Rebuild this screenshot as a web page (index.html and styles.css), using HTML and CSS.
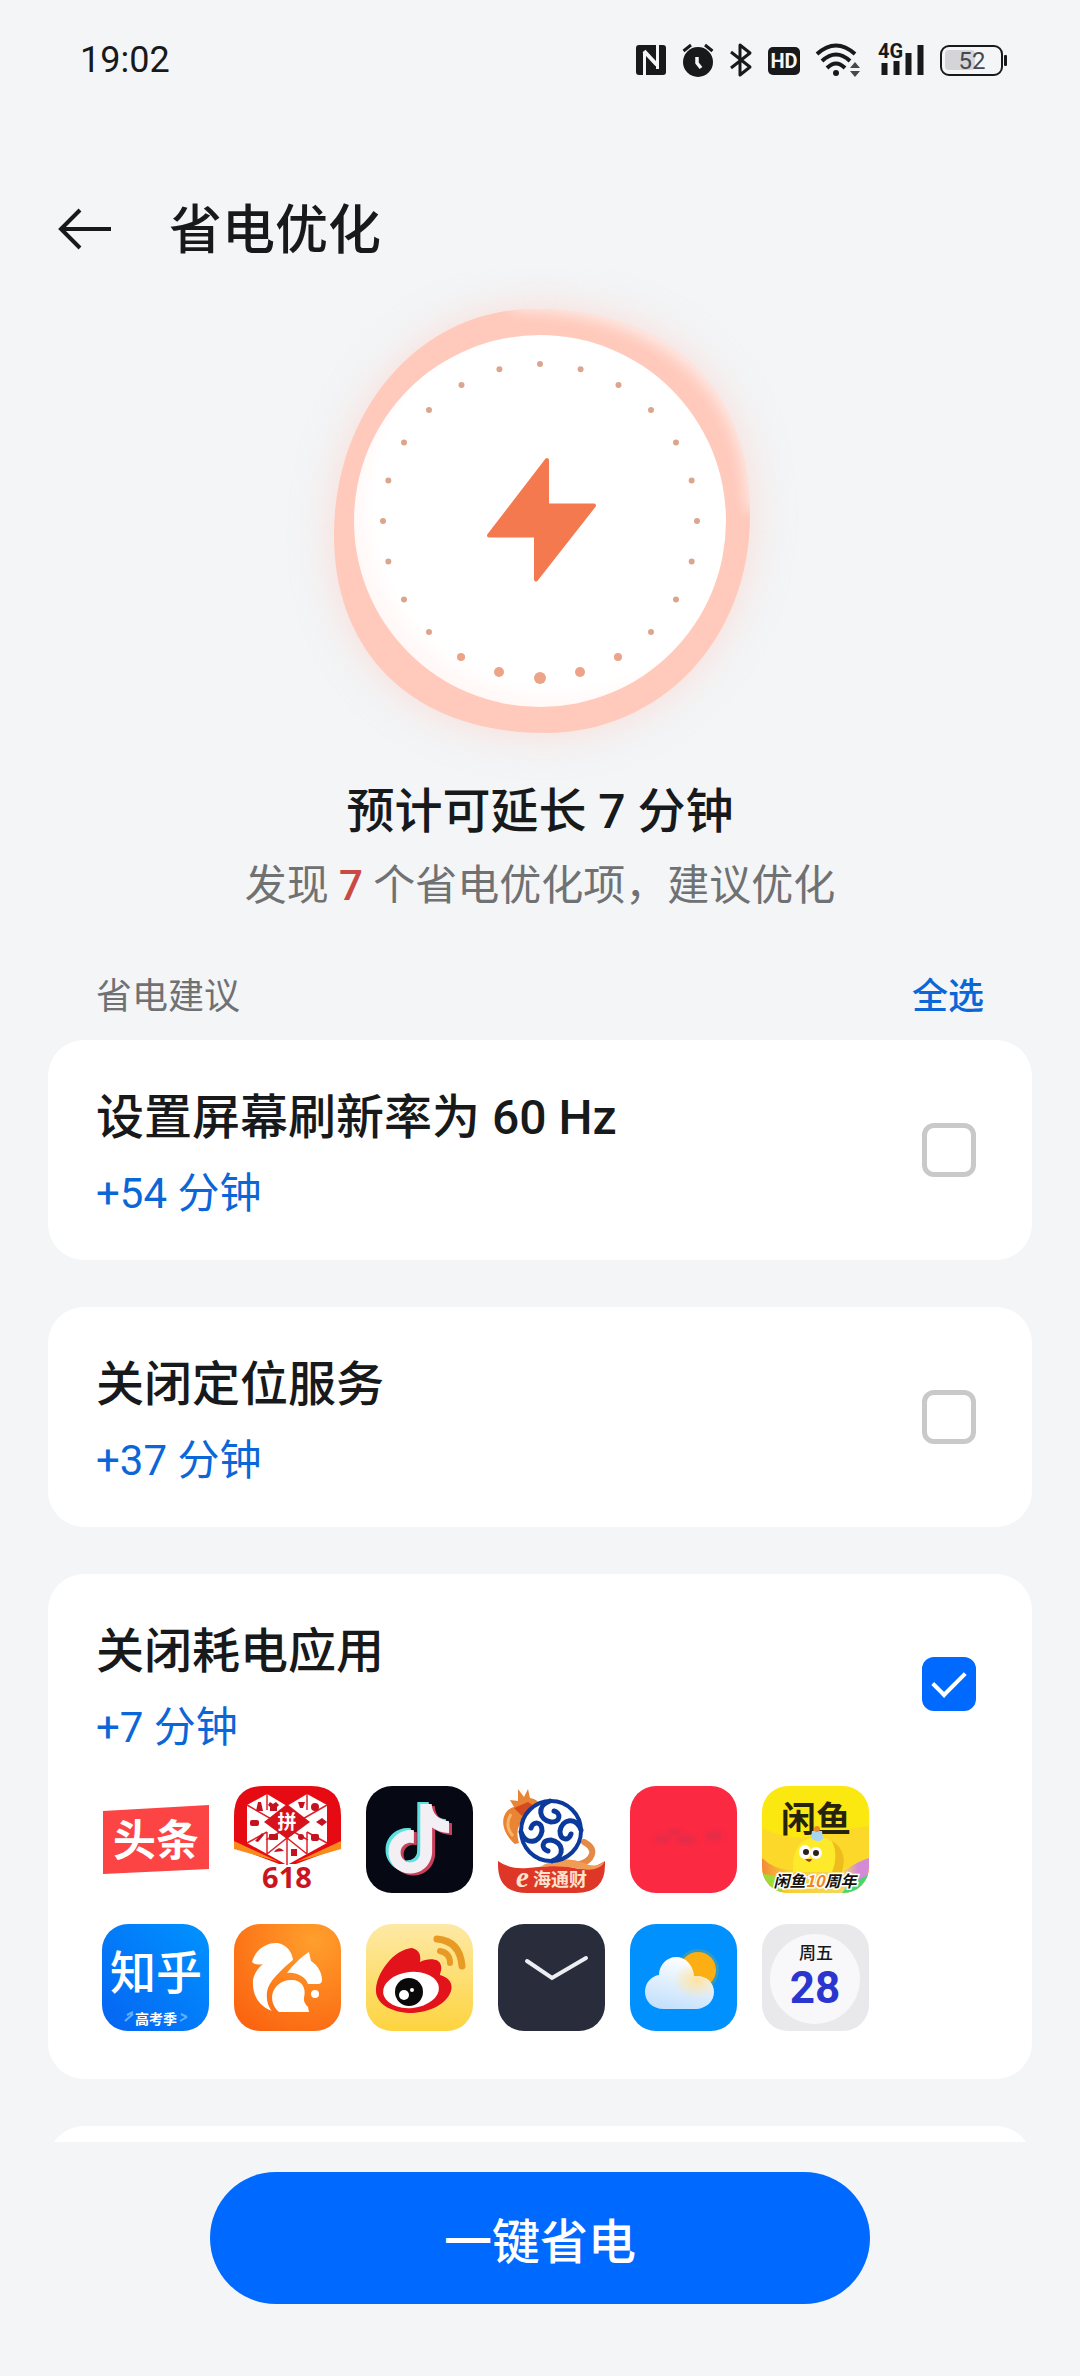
FILE: index.html
```html
<!DOCTYPE html>
<html lang="zh-CN">
<head>
  <meta charset="utf-8">
  <meta name="viewport" content="width=device-width, initial-scale=1">
  <title>省电优化</title>
  <link rel="stylesheet" href="styles.css">
</head>
<body>
  <div class="status-bar">
    <span class="time">19:02</span>
    <div class="status-icons">
      <!-- NFC -->
      <svg width="30" height="34" viewBox="0 0 30 34">
        <rect y="2" width="30" height="30" rx="3" fill="#17191b"/>
        <path d="M8.500 32V9M21.500 26V2" fill="none" stroke="#f3f5f7" stroke-width="3"/>
        <path d="M8 8l13 14" stroke="#f3f5f7" stroke-width="4"/>
      </svg>
      <!-- alarm -->
      <svg width="32" height="34" viewBox="0 0 32 34">
        <circle cx="16" cy="19" r="15" fill="#17191b"/>
        <path d="M1.500 8L9 2M30.500 8L23 2" stroke="#17191b" stroke-width="3"/>
        <path d="M15 14v6l4 5" fill="none" stroke="#f3f5f7" stroke-width="3.500"/>
      </svg>
      <!-- bluetooth -->
      <svg width="22" height="34" viewBox="0 0 22 34">
        <path d="M1 9l19 15-10 8V2l10 8L1 25" fill="none" stroke="#17191b" stroke-width="3" stroke-linejoin="round"/>
      </svg>
      <!-- HD -->
      <svg width="32" height="34" viewBox="0 0 32 34">
        <rect y="4" width="32" height="28" rx="5" fill="#17191b"/>
        <text x="16" y="25" text-anchor="middle" class="hd-text">HD</text>
      </svg>
      <!-- wifi -->
      <svg width="46" height="34" viewBox="0 0 46 34">
        <g fill="none" stroke="#17191b" stroke-width="4">
          <path d="M1 11Q20-6 39 11"/>
          <path d="M6 18Q20 5 34 18"/>
          <path d="M11 25Q20 16 29 25"/>
        </g>
        <circle cx="20" cy="30" r="3" fill="#17191b"/>
        <path d="M34 25l5-6 5 6zM34 28h10l-5 6z" fill="#47484b"/>
      </svg>
      <!-- signal -->
      <svg width="46" height="34" viewBox="0 0 46 34">
        <text x="0" y="15" class="net-text">4G</text>
        <path d="M6.500 32V20M18.500 32V18M30.500 32V10M42.500 32V2" stroke="#17191b" stroke-width="6"/>
      </svg>
      <!-- battery -->
      <svg width="68" height="34" viewBox="0 0 68 34">
        <rect x="5" y="7" width="30" height="20" rx="4" fill="#d5d4d8"/>
        <rect x="1" y="3" width="61" height="29" rx="8" fill="none" stroke="#17191b" stroke-width="2"/>
        <rect x="64" y="12" width="3" height="11" rx="1" fill="#17191b"/>
        <text x="32" y="26" text-anchor="middle" class="battery-text">52</text>
      </svg>
    </div>
  </div>

  <header class="header">
    <button class="back" aria-label="返回">
      <svg width="54" height="44" viewBox="0 0 54 44">
        <path d="M23 3L4 22l19 19M4 22h50" fill="none" stroke="#17191b" stroke-width="4"/>
      </svg>
    </button>
    <h1>省电优化</h1>
  </header>

  <main class="content">
    <section class="hero">
      <svg class="dial" width="520" height="500" viewBox="0 0 520 500">
        <defs>
          <path id="blob" d="M255 39C380 39 470 110 470 245C470 370 380 463 265 463C135 463 54 385 54 265C54 140 140 39 255 39Z"/>
          <clipPath id="blobClip"><use href="#blob"/></clipPath>
          <filter id="glow" x="-30%" y="-30%" width="160%" height="160%"><feGaussianBlur stdDeviation="22"/></filter>
          <filter id="soft" x="-30%" y="-30%" width="160%" height="160%"><feGaussianBlur stdDeviation="8"/></filter>
          <radialGradient id="face" cx="0.55" cy="0.45" r="0.56">
            <stop offset="0.88" stop-color="#fff"/>
            <stop offset="1" stop-color="#fff8f6"/>
          </radialGradient>
        </defs>
        <use href="#blob" fill="#ffc3b4" opacity="0.5" filter="url(#glow)"/>
        <use href="#blob" fill="#ffc9bb"/>
        <g clip-path="url(#blobClip)">
          <path d="M230 30C390 30 478 120 476 240" fill="none" stroke="#fdf0ec" stroke-width="18" filter="url(#soft)"/>
        </g>
        <circle cx="260" cy="251" r="186" fill="url(#face)"/>
        <!-- 24 ticks, the lowest five are bigger -->
        <circle cx="260" cy="251" r="157" fill="none" stroke="#dba58e" stroke-width="6" stroke-linecap="round" pathLength="24" stroke-dasharray="0 1"/>
        <g fill="#eda387">
          <circle cx="181" cy="387" r="4"/>
          <circle cx="219" cy="402" r="5"/>
          <circle cx="260" cy="408" r="6"/>
          <circle cx="300" cy="402" r="5"/>
          <circle cx="338" cy="387" r="4"/>
        </g>
        <path d="M267 190V235.500H314L256 309.500V265.500H209Z" fill="#f4794f" stroke="#f4794f" stroke-width="4" stroke-linejoin="round"/>
      </svg>
      <h2>预计可延长 7 分钟</h2>
      <p class="found">发现 <span class="count">7</span> 个省电优化项，建议优化</p>
    </section>

    <div class="list-head">
      <span>省电建议</span>
      <button class="select-all">全选</button>
    </div>

    <section class="card">
      <div class="row">
        <label for="refresh">
          <span class="name">设置屏幕刷新率为 60 Hz</span>
          <span class="gain">+54 分钟</span>
        </label>
        <input type="checkbox" id="refresh">
      </div>
    </section>

    <section class="card">
      <div class="row">
        <label for="location">
          <span class="name">关闭定位服务</span>
          <span class="gain">+37 分钟</span>
        </label>
        <input type="checkbox" id="location">
      </div>
    </section>

    <section class="card">
      <div class="row">
        <label for="apps">
          <span class="name">关闭耗电应用</span>
          <span class="gain">+7 分钟</span>
        </label>
        <input type="checkbox" id="apps" checked>
      </div>
      <div class="apps">
        <!-- toutiao -->
        <svg class="app" viewBox="0 0 107 107">
          <path d="M1 25L107 19V83L1 88Z" fill="#fb4443"/>
          <text x="54" y="70" class="cjk bold" font-size="43" text-anchor="middle" fill="#fff">头条</text>
        </svg>
        <!-- pinduoduo -->
        <svg class="app" viewBox="0 0 107 107">
          <path d="M0 61V30Q0 0 30 0H77Q107 0 107 30V61L62 78H45Z" fill="#e60a12"/>
          <path d="M0 55L45 76 0 63ZM107 55L62 76 107 63Z" fill="#f98a1c"/>
          <path d="M33 8L53 20 73 8 93 19V57L53 79 13 57V19Z" fill="#fff"/>
          <path d="M13 19L74 54M93 19L32 54M33 8V24M73 8V24M13 57L33 46M93 57L73 46M33 46V68M73 46V68M53 50V79M33 68L53 52 73 68" stroke="#e0202a" stroke-width="1.500" fill="none"/>
          <path d="M53 18L76 36 53 53 30 36Z" fill="#d8121c"/>
          <text x="53" y="43" class="cjk bold" font-size="19" text-anchor="middle" fill="#fff">拼</text>
          <g fill="#c41220">
            <path d="M24 16h3l2 9h-7zM36 16l3 2 3-2 3 3-2 2v4h-7v-4l-2-2z"/>
            <path d="M64 16h7l-2 6h-3z"/>
            <circle cx="81" cy="21" r="4"/>
            <rect x="16" y="34" width="9" height="6" rx="2"/>
            <path d="M82 36l6-4 5 4-5 4z"/>
            <path d="M21 55l7-8 2 2-6 7z"/>
            <rect x="35" y="48" width="9" height="6" rx="1"/>
            <circle cx="67" cy="51" r="3"/>
            <rect x="77" y="48" width="8" height="7" rx="2"/>
            <path d="M40 66q5-7 10-1zM57 63h6v7h-6z"/>
          </g>
          <text x="53" y="102" class="noto bold" font-size="29" text-anchor="middle" fill="#c9151e">618</text>
        </svg>
        <!-- douyin -->
        <svg class="app" viewBox="0 0 107 107">
          <defs>
            <path id="note" d="M12.525.02c1.310-.02 2.610-.01 3.910-.02.080 1.530.630 3.090 1.750 4.170 1.120 1.110 2.700 1.620 4.240 1.790v4.030c-1.440-.05-2.890-.35-4.200-.97-.57-.26-1.100-.59-1.620-.93-.01 2.920.010 5.840-.02 8.750-.08 1.400-.54 2.790-1.350 3.940-1.310 1.920-3.580 3.170-5.910 3.210-1.430.080-2.860-.31-4.080-1.030-2.020-1.190-3.440-3.370-3.650-5.710-.02-.5-.03-1-.01-1.490.180-1.900 1.120-3.720 2.580-4.960 1.660-1.440 3.980-2.130 6.150-1.720.020 1.480-.04 2.960-.04 4.440-.99-.32-2.150-.23-3.020.370-.63.410-1.110 1.040-1.360 1.750-.21.510-.15 1.070-.14 1.610.240 1.640 1.820 3.020 3.500 2.870 1.120-.01 2.190-.66 2.770-1.610.190-.33.400-.67.410-1.060.100-1.790.060-3.570.070-5.360.010-4.030-.01-8.050.020-12.070z"/>
          </defs>
          <rect width="107" height="107" rx="26" fill="#060813"/>
          <use href="#note" transform="translate(15 16) scale(2.900)" fill="#5ce0e0"/>
          <use href="#note" transform="translate(21 20) scale(2.900)" fill="#c9405c"/>
          <use href="#note" transform="translate(18 18) scale(2.900)" fill="#f2f0f4"/>
        </svg>
        <!-- e haitong -->
        <svg class="app" viewBox="0 0 107 107">
          <path d="M17 58C-1 42 4 24 16 21L12 14 20 15 20 3 26 11 30 3 32 12C40 13 45 20 42 27C34 29 28 29 24 35C18 42 19 50 21 57Z" fill="#e88434"/>
          <path d="M16 22L30 16 41 23 31 25 24 30Z" fill="#d64a1f"/>
          <path d="M13 28Q6 40 15 50" fill="none" stroke="#f6b567" stroke-width="3"/>
          <path d="M86 56C101 64 93 75 82 78" fill="none" stroke="#e58a46" stroke-width="6" stroke-linecap="round"/>
          <path d="M0 75Q12 84 30 82T66 79Q88 88 107 75V79Q107 107 78 107H29Q0 107 0 79Z" fill="#df3727"/>
          <path d="M42 81Q64 68 86 77 98 83 107 75 102 86 84 83 62 79 42 81Z" fill="#f29b55"/>
          <circle cx="53" cy="45" r="30" fill="#fff" stroke="#0b3a9c" stroke-width="4"/>
          <g fill="none" stroke="#0b3a9c" stroke-width="5" stroke-linecap="round">
            <path d="M52 15C38 20 41 34 53 36C63 36 63 27 56 25"/>
            <path d="M83 44C78 30 64 33 62 45C62 55 71 55 73 48"/>
            <path d="M54 75C68 70 65 56 53 54C43 54 43 63 50 65"/>
            <path d="M23 46C28 60 42 57 44 45C44 35 35 35 33 42"/>
          </g>
          <text x="18" y="101" class="serif" font-size="29" fill="#fbe3cd">e</text>
          <text x="62" y="100" class="cjk bold" font-size="18" text-anchor="middle" fill="#fbe3cd">海通财</text>
        </svg>
        <!-- app with a worn-off label -->
        <svg class="app" viewBox="0 0 107 107">
          <defs><filter id="smudge"><feGaussianBlur stdDeviation="2"/></filter></defs>
          <rect width="107" height="107" rx="26" fill="#fc2943"/>
          <g fill="#c43350" opacity="0.4" filter="url(#smudge)">
            <ellipse cx="32" cy="53" rx="9" ry="4"/>
            <ellipse cx="56" cy="54" rx="10" ry="5"/>
            <ellipse cx="84" cy="50" rx="9" ry="5"/>
            <ellipse cx="44" cy="46" rx="8" ry="3"/>
          </g>
        </svg>
        <!-- xianyu -->
        <svg class="app" viewBox="0 0 107 107">
          <defs>
            <clipPath id="round"><rect width="107" height="107" rx="26"/></clipPath>
            <linearGradient id="xyFloor" x1="0" x2="1">
              <stop offset="0" stop-color="#f4893a"/>
              <stop offset="0.25" stop-color="#f8cf2f"/>
              <stop offset="0.75" stop-color="#f0d85e"/>
              <stop offset="0.9" stop-color="#d58ad8"/>
            </linearGradient>
          </defs>
          <g clip-path="url(#round)">
            <rect width="107" height="107" fill="#fbe810"/>
            <path d="M0 42Q30 56 53 50T107 40V90H0Z" fill="#fcd82a"/>
            <path d="M0 72Q14 86 36 84L84 84Q94 76 107 72V107H0Z" fill="url(#xyFloor)"/>
            <path d="M0 88L20 90V107H0Z" fill="#9edb35"/>
            <path d="M86 100L107 88V107H80Z" fill="#42d970"/>
            <text x="54" y="46" class="cjk bold" font-size="35" text-anchor="middle" fill="#26220c">闲鱼</text>
            <path d="M31 86C30 66 36 54 52 51C70 50 84 62 81 86Z" fill="#fdea2b"/>
            <path d="M70 55C82 62 84 74 80 86H70Q77 70 70 55Z" fill="#efbc1e"/>
            <path d="M49 52L50 45 60 45 61 53Q55 58 49 52Z" fill="#a8d5ef"/>
            <circle cx="55" cy="43" r="3" fill="#e98931"/>
            <ellipse cx="43" cy="66" rx="6" ry="7" fill="#fff"/>
            <ellipse cx="54" cy="67" rx="6" ry="6" fill="#fff"/>
            <circle cx="44" cy="66" r="3" fill="#2c2218"/>
            <circle cx="54" cy="67" r="3" fill="#2c2218"/>
            <path d="M43 73H50Q48 79 43 73Z" fill="#a33b18"/>
          </g>
          <text x="53" y="101" class="cjk bold slant" font-size="16" text-anchor="middle" fill="#17120d" stroke="#fff" stroke-width="3" paint-order="stroke">闲鱼<tspan fill="#ef8420">10</tspan>周年</text>
        </svg>
        <!-- zhihu -->
        <svg class="app" viewBox="0 0 107 107">
          <defs>
            <linearGradient id="zh" x1="1" y1="0" x2="0" y2="1">
              <stop offset="0" stop-color="#0093ff"/>
              <stop offset="1" stop-color="#0564f2"/>
            </linearGradient>
          </defs>
          <rect width="107" height="107" rx="26" fill="url(#zh)"/>
          <text x="54" y="65" class="cjk medium" font-size="46" text-anchor="middle" fill="#fff">知乎</text>
          <path d="M23 97l8-7M25 91l6-3M79 90l6 3M78 97l7-4" stroke="#5fb0ff" stroke-width="2"/>
          <text x="54" y="100" class="cjk bold" font-size="14" text-anchor="middle" fill="#fff">高考季</text>
        </svg>
        <!-- uc -->
        <svg class="app" viewBox="0 0 107 107">
          <defs>
            <radialGradient id="uc" cx="0.75" cy="0.15" r="1">
              <stop offset="0" stop-color="#ff9f2c"/>
              <stop offset="1" stop-color="#fb6410"/>
            </radialGradient>
          </defs>
          <rect width="107" height="107" rx="26" fill="url(#uc)"/>
          <g fill="#fff">
            <path d="M18 38C22 24 34 18 44 19C53 21 58 28 59 36C47 46 34 58 33 68C32 77 35 84 38 87C24 82 18 70 19 56C20 50 24 44 29 40C25 41 21 41 18 38Z"/>
            <path d="M53 49C59 41 67 33 75 28L77 37C85 42 88 50 88 56Q88 60 84 60H74C71 52 62 48 53 49Z"/>
            <path d="M56 56C66 55 73 62 70 74Q69 78 74 83L75 88H45C38 82 37 74 39 68C42 60 50 56 56 56Z"/>
            <circle cx="81" cy="70" r="4"/>
          </g>
        </svg>
        <!-- weibo -->
        <svg class="app" viewBox="0 0 107 107">
          <defs>
            <linearGradient id="wb" x1="0" y1="0" x2="0" y2="1">
              <stop offset="0" stop-color="#fde9a6"/>
              <stop offset="1" stop-color="#fdd43f"/>
            </linearGradient>
          </defs>
          <rect width="107" height="107" rx="26" fill="url(#wb)"/>
          <path d="M10 68C9 50 28 25 46 24C54 26 55 32 54 38C62 34 74 34 75 42C76 46 74 49 74 51C84 54 87 60 85 67C80 82 60 89 43 89C25 88 11 80 10 68Z" fill="#e3131c"/>
          <ellipse cx="45" cy="66" rx="28" ry="18" transform="rotate(-6 45 66)" fill="#fff"/>
          <circle cx="43" cy="68" r="14" fill="#0a0a0a"/>
          <circle cx="38" cy="71" r="5" fill="#fff"/>
          <circle cx="46" cy="66" r="2" fill="#fff"/>
          <g fill="none" stroke="#e79a24" stroke-linecap="round">
            <path d="M71 15Q94 17 96 42" stroke-width="7"/>
            <path d="M74 27Q84 29 84 39" stroke-width="6"/>
          </g>
        </svg>
        <!-- clock -->
        <svg class="app" viewBox="0 0 107 107">
          <rect width="107" height="107" rx="26" fill="#292d3b"/>
          <path d="M29 37L54 54 88 34" fill="none" stroke="#eceef2" stroke-width="4" stroke-linecap="round"/>
        </svg>
        <!-- weather -->
        <svg class="app" viewBox="0 0 107 107">
          <defs>
            <linearGradient id="cloud" x1="0.6" y1="0" x2="0.3" y2="1">
              <stop offset="0" stop-color="#fff"/>
              <stop offset="1" stop-color="#c3e0fc"/>
            </linearGradient>
            <radialGradient id="warm" cx="0.75" cy="0.45" r="0.35">
              <stop offset="0" stop-color="#ffe3a0"/>
              <stop offset="1" stop-color="#ffe3a0" stop-opacity="0"/>
            </radialGradient>
            <path id="cloudShape" d="M34 85C22 85 15 77 15 68C15 58 22 52 29 51C29 41 37 33 46 33C56 33 63 41 64 52C76 51 84 58 84 68C84 78 76 84 67 85Z"/>
          </defs>
          <rect width="107" height="107" rx="26" fill="#0091ff"/>
          <circle cx="68" cy="46" r="21" fill="#76a768" opacity="0.4"/>
          <circle cx="68" cy="46" r="18" fill="#fcae13"/>
          <use href="#cloudShape" fill="url(#cloud)"/>
          <use href="#cloudShape" fill="url(#warm)"/>
        </svg>
        <!-- calendar -->
        <svg class="app" viewBox="0 0 107 107">
          <rect width="107" height="107" rx="26" fill="#e9e9eb"/>
          <circle cx="53" cy="55" r="45" fill="#f8f8fa"/>
          <text x="54" y="35" class="cjk medium" font-size="17" text-anchor="middle" fill="#17191b">周五</text>
          <text x="53" y="79" class="bold" font-size="44" text-anchor="middle" fill="#2b36cf">28</text>
        </svg>
      </div>
    </section>

    <section class="card"></section>
  </main>

  <footer class="footer">
    <button class="save">一键省电</button>
  </footer>
</body>
</html>
```

FILE: styles.css
```css
* {
  box-sizing: border-box;
}
body {
  margin: 0;
  height: 100vh;
  display: flex;
  flex-direction: column;
  background-color: #f3f5f7;
  color: #17191b;
  font-family: Roboto, "Noto Sans CJK SC", sans-serif;
}
h1, h2, p {
  margin: 0;
}
button {
  padding: 0;
  border: none;
  background: none;
  font-family: inherit;
  cursor: pointer;
}
svg {
  display: block;
  overflow: visible;
}

/* status bar */
.status-bar {
  flex: none;
  height: 120px;
  padding: 0 72px 0 80px;
  display: flex;
  align-items: center;
  justify-content: space-between;
}
.time {
  font-size: 36px;
}
.status-icons {
  display: flex;
  gap: 16px;
}
.hd-text {
  font-size: 20px;
  font-weight: 700;
  fill: #f3f5f7;
}
.net-text {
  font-size: 20px;
  font-weight: 700;
  fill: #17191b;
}
.battery-text {
  font-size: 24px;
  fill: #47484b;
}

/* title */
.header {
  flex: none;
  display: flex;
  align-items: center;
  gap: 58px;
  padding: 74px 57px 6px;
}
h1 {
  padding-top: 4px;
  font-size: 53px;
  line-height: 66px;
  font-weight: 500;
}

.content {
  flex: 1;
  min-height: 0;
  overflow-y: auto;
  scrollbar-width: none;
  padding: 0 48px;
}

/* dial and summary */
.hero {
  text-align: center;
}
.dial {
  margin: 0 auto;
}
h2 {
  margin-top: 8px;
  font-size: 48px;
  line-height: 68px;
  font-weight: 500;
}
.found {
  margin-top: 10px;
  font-size: 42px;
  line-height: 60px;
  color: #707173;
}
.count {
  font-weight: 500;
  color: #c94a45;
}

.list-head {
  display: flex;
  justify-content: space-between;
  margin-top: 56px;
  padding: 0 48px;
  font-size: 36px;
  line-height: 50px;
  color: #707173;
}
.select-all {
  font-size: 36px;
  line-height: 50px;
  font-weight: 500;
  color: #0b66d8;
}

/* suggestion cards */
.card {
  min-height: 220px;
  margin-bottom: 47px;
  border-radius: 36px;
  background-color: #fff;
}
.list-head + .card {
  margin-top: 18px;
}
.row {
  height: 220px;
  padding: 0 56px 0 48px;
  display: flex;
  align-items: center;
  justify-content: space-between;
}
.row label {
  padding-top: 8px;
}
.name,
.gain {
  display: block;
}
.name {
  font-size: 48px;
  line-height: 68px;
  font-weight: 500;
}
.gain {
  margin-top: 12px;
  font-size: 42px;
  line-height: 60px;
  color: #0b66d8;
}
input[type="checkbox"] {
  appearance: none;
  flex: none;
  display: grid;
  place-items: center;
  width: 54px;
  height: 54px;
  margin: 0;
  border: 5px solid #c9c9c9;
  border-radius: 12px;
}
input[type="checkbox"]:checked {
  border-color: #0069ff;
  background-color: #0069ff;
}
input[type="checkbox"]:checked::before {
  content: "";
  width: 14px;
  height: 28px;
  margin-bottom: 8px;
  border: solid #fff;
  border-width: 0 4px 4px 0;
  transform: rotate(45deg);
}

/* app icons */
.apps {
  display: grid;
  grid-template-columns: repeat(6, 107px);
  gap: 31px 25px;
  margin-top: -8px;
  padding: 0 54px 48px;
}
.app {
  width: 107px;
  height: 107px;
}
.cjk {
  font-family: "Noto Sans CJK SC", sans-serif;
}
.noto {
  font-family: "Noto Sans", sans-serif;
}
.serif {
  font-family: "Liberation Serif", serif;
  font-style: italic;
  font-weight: 700;
}
.medium {
  font-weight: 500;
}
.bold {
  font-weight: 700;
}
.slant {
  font-style: italic;
}

/* bottom action */
.footer {
  flex: none;
  display: flex;
  justify-content: center;
  padding: 30px 48px 72px;
}
.save {
  width: 100%;
  max-width: 660px;
  height: 132px;
  border-radius: 66px;
  background-color: #0069ff;
  color: #fff;
  font-size: 48px;
  font-weight: 500;
}
```
